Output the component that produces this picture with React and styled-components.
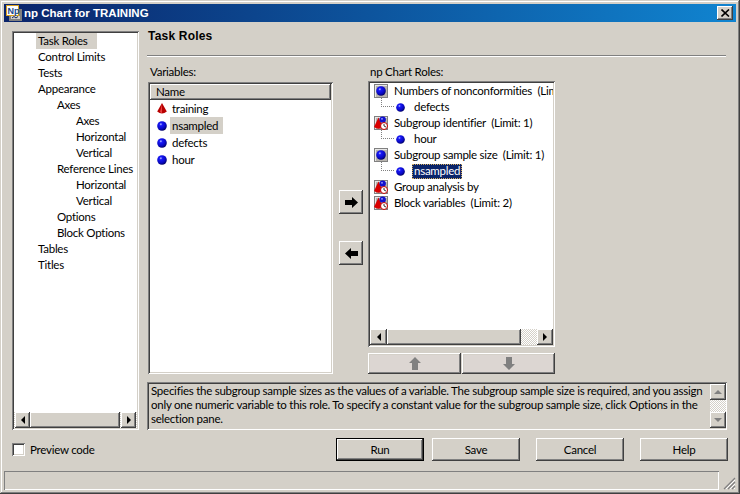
import React from 'react';
import styled, { createGlobalStyle, css } from 'styled-components';

const Global = createGlobalStyle`
  html, body { margin: 0; padding: 0; background: #d4d0c8; }
  #root { width: 740px; height: 494px; }
  * { box-sizing: border-box; }
`;

const raised = css`
  background-color: #d4d0c8;
  box-shadow: inset -1px -1px #404040, inset 1px 1px #fff, inset -2px -2px #808080, inset 2px 2px #d4d0c8;
`;
const sunken = css`
  box-shadow: inset 1px 1px #808080, inset -1px -1px #fff, inset 2px 2px #404040, inset -2px -2px #d4d0c8;
`;
const dither = css`
  background: conic-gradient(#fff 25%, #d4d0c8 0 50%, #fff 0 75%, #d4d0c8 0) 0 0 / 2px 2px;
`;

const Window = styled.div`
  width: 740px; height: 494px; padding: 4px; display: flex; flex-direction: column;
  background: #d4d0c8; color: #000; overflow: hidden;
  font-family: Lato, "Liberation Sans", Arial, sans-serif; font-size: 11.5px; letter-spacing: -.25px;
  box-shadow: inset -1px -1px #404040, inset 1px 1px #d4d0c8, inset -2px -2px #808080, inset 2px 2px #fff;
`;
const TitleBar = styled.div`
  height: 18px; flex: none; display: flex; align-items: center; padding: 0 3px 0 2px;
  background: linear-gradient(90deg, #0a246a, #1084d0); color: #fff; font-family: "Liberation Sans", Arial, sans-serif;
  font-weight: bold; font-size: 11.5px; letter-spacing: 0;
`;
const TitleText = styled.span`margin-left: 2px; flex: 1;`;
const CloseButton = styled.div`
  ${raised}; width: 16px; height: 14px; display: flex; align-items: center; justify-content: center;
`;
const Body = styled.div`flex: 1; min-height: 0; display: flex; padding-left: 8px; gap: 8px;`;
const LeftColumn = styled.div`width: 127px; padding-top: 9px; display: flex; flex-direction: column;`;
const Tree = styled.div`
  ${sunken}; height: 399px; background: #fff; padding: 2px; display: flex; flex-direction: column;
`;
const TreeRows = styled.div`flex: 1; overflow: hidden;`;
const TreeRow = styled.div`
  height: 16px; line-height: 16px; padding-left: ${p => 22 + p.$level * 19}px; display: flex; white-space: nowrap;
`;
const TreeLabel = styled.span`
  padding: 0 ${p => (p.$selected ? 9 : 3)}px 0 2px; background: ${p => (p.$selected ? '#d4d0c8' : 'transparent')};
`;
const ScrollH = styled.div`height: 16px; flex: none; display: flex; padding: 0 1px; ${dither};`;
const ScrollBtn = styled.div`
  ${raised}; width: ${p => p.$w || 16}px; flex: none; height: 100%; display: flex; align-items: center; justify-content: center;
  ${p => p.$vertical && css`width: 100%; height: ${p.$h}px;`}
`;
const Thumb = styled.div`${raised}; width: ${p => p.$w}px; flex: none;`;
const Grow = styled.div`flex: 1;`;
const CheckRow = styled.label`display: flex; align-items: center; gap: 5px; margin-top: 13px; height: 13px;`;
const CheckBox = styled.span`${sunken}; width: 13px; height: 13px; background: #fff; flex: none;`;

const RightColumn = styled.div`width: 581px; padding-top: 6px; display: flex; flex-direction: column;`;
const Heading = styled.div`
  height: 17px; line-height: 17px; padding-left: 1px; font-family: "Liberation Sans", Arial, sans-serif;
  font-size: 12px; font-weight: bold; letter-spacing: .2px;
`;
const Separator = styled.div`
  margin-top: 10px; width: 579px; height: 2px; flex: none; background: #808080; border-bottom: 1px solid #fff;
`;
const Panes = styled.div`display: flex; margin-top: 7px; padding-left: 1px; height: 310px;`;
const VarColumn = styled.div`width: 185px; display: flex; flex-direction: column;`;
const PaneLabel = styled.div`height: ${p => p.$h}px; line-height: 15px; padding-left: 2px; flex: none;`;
const ListBox = styled.div`
  ${sunken}; background: #fff; padding: 2px; height: 292px; display: flex; flex-direction: column; overflow: hidden;
`;
const ListHeader = styled.div`
  ${raised}; height: 16px; line-height: 15px; padding-left: 6px; flex: none;
`;
const VarRow = styled.div`height: 17px; display: flex; align-items: center; padding-left: 7px; gap: 3px;`;
const VarLabel = styled.span`
  padding: 0 ${p => (p.$selected ? 5 : 3)}px 0 2px; line-height: 17px; background: ${p => (p.$selected ? '#d4d0c8' : 'transparent')};
`;
const MoveColumn = styled.div`width: 35px; padding: 126px 0 0 6px; display: flex; flex-direction: column; gap: 27px;`;
const MoveButton = styled.div`
  ${raised}; width: 24px; height: 24px; display: flex; align-items: center; justify-content: center;
`;
const RolesColumn = styled.div`width: 187px; display: flex; flex-direction: column;`;
const RolesBox = styled.div`
  ${sunken}; background: #fff; padding: 2px; height: 266px; display: flex; flex-direction: column;
`;
const RolesRows = styled.div`flex: 1; overflow: hidden; white-space: pre;`;
const RoleRow = styled.div`height: 16px; display: flex; align-items: center; padding-left: 4px; gap: 6px; line-height: 16px;`;
const ChildRow = styled.div`position: relative; height: 16px; display: flex; align-items: center; padding-left: 26px; gap: 8px; line-height: 16px;`;
const Connector = styled.span`
  position: absolute; left: 11px; top: -1px; width: 13px; height: 9px;
  border-left: 1px dotted #808080; border-bottom: 1px dotted #808080;
`;
const ChildLabel = styled.span`
  padding: 0 2px; margin-left: -1px; line-height: 14px; height: 15px;
  ${p => p.$selected && css`background: #0a246a; color: #fff; outline: 1px dotted #d8b060; outline-offset: -1px;`}
`;
const IconBox = styled.span`
  width: 14px; height: 14px; flex: none; display: flex; align-items: center; justify-content: center;
  background: #b8b4ae; box-shadow: inset 1px 1px #808080, inset -1px -1px #808080, inset 2px 2px #e8e8e8;
`;
const RoleScroll = styled.div`height: 16px; flex: none; display: flex; ${dither};`;
const UpDown = styled.div`display: flex; gap: 1px; margin-top: 6px; height: 21px;`;
const DisabledButton = styled.div`
  ${raised}; flex: 1; display: flex; align-items: center; justify-content: center;
  background-color: #dcd6d2;
`;
const HelpBox = styled.div`
  ${sunken}; margin-top: 8px; width: 580px; height: 48px; flex: none; display: flex; padding: 2px 1px 2px 2px;
`;
const HelpText = styled.div`flex: 1; padding: 0 2px; line-height: 14px; white-space: nowrap; overflow: hidden;`;
const ScrollV = styled.div`width: 16px; flex: none; display: flex; flex-direction: column; ${dither};`;
const ButtonRow = styled.div`display: flex; justify-content: flex-end; gap: 8px; margin-top: 8px;`;
const ActionButton = styled.button`
  ${raised}; width: 88px; height: 23px; border: 0; padding: 0 0 1px; margin-left: ${p => p.$gap || 0}px;
  font: inherit; letter-spacing: inherit; color: #000;
  ${p => p.$primary && css`
    box-shadow: inset 0 0 0 1px #000, inset -2px -2px #404040, inset 2px 2px #fff, inset -3px -3px #808080;
  `}
`;
const StatusRow = styled.div`height: 19px; flex: none; display: flex; margin-bottom: 0;`;
const StatusBar = styled.div`
  width: 715px; height: 19px; box-shadow: inset 1px 1px #808080, inset -1px -1px #fff;
`;
const Grip = styled.div`flex: 1; display: flex; align-items: flex-end; justify-content: flex-end;`;

const Dot = ({ id, size = 10 }) => (
  <svg width={size} height={size} viewBox="0 0 10 10">
    <defs>
      <radialGradient id={id} cx=".38" cy=".32" r=".7">
        <stop offset="0" stopColor="#c0c8ff" />
        <stop offset=".22" stopColor="#1818f8" />
        <stop offset=".7" stopColor="#0808c0" />
        <stop offset="1" stopColor="#000060" />
      </radialGradient>
    </defs>
    <circle cx="5" cy="5" r="4.8" fill={`url(#${id})`} />
  </svg>
);
const Cone = () => (
  <svg width="10" height="12" viewBox="0 0 10 12">
    <path d="M5 0 L9.8 8.5 Q5 12.5 .2 8.5Z" fill="#b80000" />
    <path d="M5 1 L3 9 Q4 10 5 10Z" fill="#e84040" />
  </svg>
);
const Mixed = () => (
  <svg width="14" height="14" viewBox="0 0 14 14">
    <path d="M4.5 1.5 L9 11 Q4.5 14.5 0 11Z" fill="#d80000" />
    <circle cx="8.7" cy="3.6" r="3.2" fill="#1010d0" />
    <circle cx="8" cy="2.8" r=".9" fill="#a0a8ff" />
    <circle cx="10" cy="10" r="3.5" fill="#fff" stroke="#c00000" />
    <path d="M10 8 V10 L12 11" stroke="#000" fill="none" strokeWidth=".8" />
  </svg>
);
const Tri = ({ dir, color = '#000', s = 4 }) => {
  const d = {
    left: `M${s} 0 V${s * 2} L0 ${s}Z`,
    right: `M0 0 V${s * 2} L${s} ${s}Z`,
    up: `M${s} 0 L${s * 2} ${s} H0Z`,
    down: `M0 0 H${s * 2} L${s} ${s}Z`,
  }[dir];
  const v = dir === 'left' || dir === 'right';
  return <svg width={v ? s : s * 2} height={v ? s * 2 : s} viewBox={`0 0 ${v ? s : s * 2} ${v ? s * 2 : s}`}><path d={d} fill={color} /></svg>;
};
const BigArrow = ({ dir, color = '#000' }) => {
  const paths = {
    right: 'M0 3 H7 V0 L13 5.5 L7 11 V8 H0Z',
    left: 'M13 3 H6 V0 L0 5.5 L6 11 V8 H13Z',
  };
  return <svg width="13" height="11" viewBox="0 0 13 11"><path d={paths[dir]} fill={color} /></svg>;
};
const VertArrow = ({ up }) => (
  <svg width="12" height="13" viewBox="0 0 12 13">
    <path d={up ? 'M6 0 L12 6 H9 V13 H3 V6 H0Z' : 'M3 0 H9 V7 H12 L6 13 L0 7 H3Z'} fill="#808080" />
  </svg>
);
const AppIcon = () => (
  <svg width="16" height="16" viewBox="0 0 16 16">
    <rect x="3" y="4" width="13" height="12" fill="#808080" />
    <rect x="5" y="11" width="9" height="3" fill="#d4d0c8" />
    <path d="M6 13 L8 11.5 L10 13 L12 11.5" stroke="#0a246a" fill="none" />
    <rect x=".5" y=".5" width="12" height="10" fill="#fff" stroke="#d8a020" />
    <text x="1.5" y="9" fontSize="9" fontWeight="bold" fontFamily="Liberation Sans" fill="#1a4a90">Np</text>
  </svg>
);

const treeItems = [
  ['Task Roles', 0, true], ['Control Limits', 0], ['Tests', 0], ['Appearance', 0], ['Axes', 1], ['Axes', 2],
  ['Horizontal', 2], ['Vertical', 2], ['Reference Lines', 1], ['Horizontal', 2], ['Vertical', 2],
  ['Options', 1], ['Block Options', 1], ['Tables', 0], ['Titles', 0],
];
const variables = [
  ['training', 'cone'], ['nsampled', 'dot', true], ['defects', 'dot'], ['hour', 'dot'],
];
const roles = [
  { label: 'Numbers of nonconformities  (Limit: 1)', icon: 'dot', child: 'defects' },
  { label: 'Subgroup identifier  (Limit: 1)', icon: 'mixed', child: 'hour' },
  { label: 'Subgroup sample size  (Limit: 1)', icon: 'dot', child: 'nsampled', selected: true },
  { label: 'Group analysis by', icon: 'mixed' },
  { label: 'Block variables  (Limit: 2)', icon: 'mixed' },
];

export default function App() {
  return (
    <Window>
      <Global />
      <TitleBar>
        <AppIcon />
        <TitleText>np Chart for TRAINING</TitleText>
        <CloseButton>
          <svg width="9" height="8" viewBox="0 0 9 8"><path d="M.5 .5 L8 7.5 M8 .5 L.5 7.5" stroke="#000" strokeWidth="1.6" /></svg>
        </CloseButton>
      </TitleBar>
      <Body>
        <LeftColumn>
          <Tree>
            <TreeRows>
              {treeItems.map(([t, l, s], i) => (
                <TreeRow key={i} $level={l}><TreeLabel $selected={s}>{t}</TreeLabel></TreeRow>
              ))}
            </TreeRows>
            <ScrollH>
              <ScrollBtn $w={15}><Tri dir="left" /></ScrollBtn>
              <Thumb $w={90} />
              <Grow />
              <ScrollBtn $w={15}><Tri dir="right" /></ScrollBtn>
            </ScrollH>
          </Tree>
          <CheckRow><CheckBox />Preview code</CheckRow>
        </LeftColumn>
        <RightColumn>
          <Heading>Task Roles</Heading>
          <Separator />
          <Panes>
            <VarColumn>
              <PaneLabel $h={18}>Variables:</PaneLabel>
              <ListBox>
                <ListHeader>Name</ListHeader>
                {variables.map(([t, k, s]) => (
                  <VarRow key={t}>
                    {k === 'cone' ? <Cone /> : <Dot id={`v-${t}`} />}
                    <VarLabel $selected={s}>{t}</VarLabel>
                  </VarRow>
                ))}
              </ListBox>
            </VarColumn>
            <MoveColumn>
              <MoveButton><BigArrow dir="right" /></MoveButton>
              <MoveButton><BigArrow dir="left" /></MoveButton>
            </MoveColumn>
            <RolesColumn>
              <PaneLabel $h={17}>np Chart Roles:</PaneLabel>
              <RolesBox>
                <RolesRows>
                  {roles.map((r, i) => (
                    <React.Fragment key={r.label}>
                      <RoleRow>
                        {r.icon === 'dot'
                          ? <IconBox><Dot id={`r-${i}`} /></IconBox>
                          : <IconBox><Mixed /></IconBox>}
                        {r.label}
                      </RoleRow>
                      {r.child && (
                        <ChildRow>
                          <Connector />
                          <Dot id={`c-${i}`} size={9} />
                          <ChildLabel $selected={r.selected}>{r.child}</ChildLabel>
                        </ChildRow>
                      )}
                    </React.Fragment>
                  ))}
                </RolesRows>
                <RoleScroll>
                  <ScrollBtn $w={17}><Tri dir="left" /></ScrollBtn>
                  <Thumb $w={134} />
                  <Grow />
                  <ScrollBtn $w={16}><Tri dir="right" /></ScrollBtn>
                </RoleScroll>
              </RolesBox>
              <UpDown>
                <DisabledButton><VertArrow up /></DisabledButton>
                <DisabledButton><VertArrow /></DisabledButton>
              </UpDown>
            </RolesColumn>
          </Panes>
          <HelpBox>
            <HelpText>
              <div>Specifies the subgroup sample sizes as the values of a variable. The subgroup sample size is required, and you assign</div>
              <div>only one numeric variable to this role. To specify a constant value for the subgroup sample size, click Options in the</div>
              <div>selection pane.</div>
            </HelpText>
            <ScrollV>
              <ScrollBtn $vertical $h={16}><Tri dir="up" color="#808080" /></ScrollBtn>
              <Grow />
              <ScrollBtn $vertical $h={16}><Tri dir="down" color="#808080" /></ScrollBtn>
            </ScrollV>
          </HelpBox>
          <ButtonRow>
            <ActionButton $primary>Run</ActionButton>
            <ActionButton>Save</ActionButton>
            <ActionButton $gap={8}>Cancel</ActionButton>
            <ActionButton $gap={8}>Help</ActionButton>
          </ButtonRow>
        </RightColumn>
      </Body>
      <StatusRow>
        <StatusBar />
        <Grip>
          <svg width="13" height="13" viewBox="0 0 13 13">
            <path d="M12 1 L1 12 M12 5 L5 12 M12 9 L9 12" stroke="#808080" strokeWidth="1.2" />
            <path d="M12 3 L3 12 M12 7 L7 12 M12 11 L11 12" stroke="#fff" strokeWidth="1" />
          </svg>
        </Grip>
      </StatusRow>
    </Window>
  );
}
